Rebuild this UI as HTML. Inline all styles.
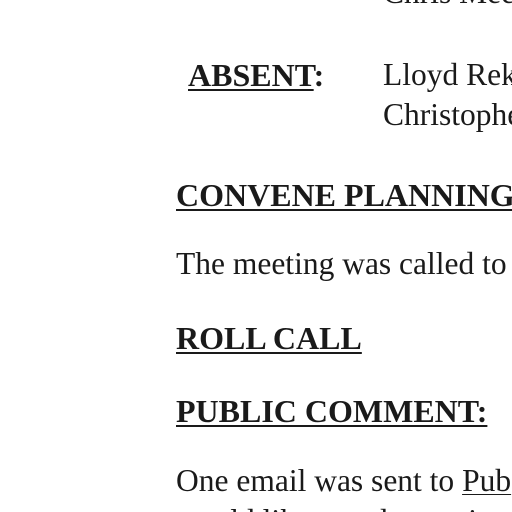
<!DOCTYPE html>
<html><head><style>
html,body{margin:0;padding:0;background:#fff;width:512px;height:512px;overflow:hidden;position:relative}
div{position:absolute;white-space:nowrap;font-family:"Liberation Serif",serif;font-size:31.5px;line-height:32px;color:#1a1a1a}
b{font-weight:bold;font-size:32px}
u{text-decoration:underline;text-decoration-thickness:2px;text-underline-offset:3px}
</style></head><body>
<div style="left:383px;top:-23px">Chris Mee</div>
<div style="left:188px;top:59px"><b><u>ABSENT</u>:</b></div>
<div style="left:383px;top:59px">Lloyd Rek</div>
<div style="left:383px;top:99px">Christopher</div>
<div style="left:176px;top:179px"><b><u>CONVENE PLANNING</u></b></div>
<div style="left:176px;top:248px">The meeting was called to</div>
<div style="left:176px;top:322px"><b><u>ROLL CALL</u></b></div>
<div style="left:176px;top:395px"><b><u>PUBLIC COMMENT:</u></b></div>
<div style="left:176px;top:465px">One email was sent to <u style="text-decoration-thickness:1px">Pub</u></div>
<div style="left:176px;top:505px">would like noted as anti</div>
</body></html>
